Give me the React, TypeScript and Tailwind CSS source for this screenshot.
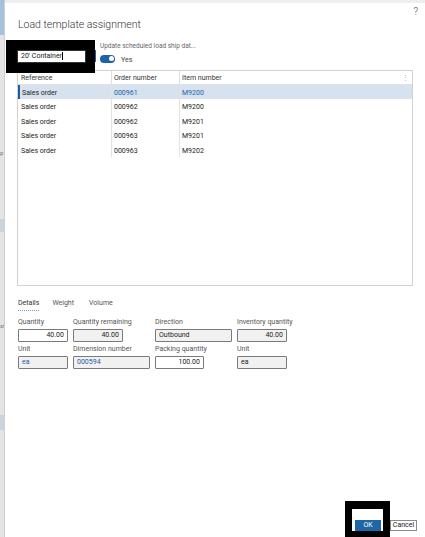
import React from "react";

const rows = [
    { ref: "Sales order", order: "000961", item: "M9200", selected: true },
    { ref: "Sales order", order: "000962", item: "M9200" },
    { ref: "Sales order", order: "000962", item: "M9201" },
    { ref: "Sales order", order: "000963", item: "M9201" },
    { ref: "Sales order", order: "000963", item: "M9202" },
];

function Field({ label, value, width, gray, align = "right", link }: { label: string; value: string; width: string; gray?: boolean; align?: "left" | "right"; link?: boolean }) {
    return (
        <div className="flex flex-col">
            <div className="h-[13px] text-[7px] leading-[13px] text-[#555]">{label}</div>
            <div
                className={`${width} h-[13px] border border-[#7a7a7a] rounded-[1px] px-[3px] text-[7px] leading-[11px] ${gray ? "bg-[#f1f1f1]" : "bg-white"} ${align === "right" ? "text-right" : "text-left"} ${link ? "text-[#1a5fa8]" : "text-[#222]"}`}
            >
                {value}
            </div>
        </div>
    );
}

export default function App(): React.JSX.Element {
    return (
        <div className="relative w-[425px] h-[537px] overflow-hidden bg-white flex font-['Roboto',sans-serif]">
            {/* left background strip */}
            <div className="w-[5px] h-full flex flex-col bg-[#e4e4e4] border-r border-[#cfcfcf]">
                <div className="h-[35px] bg-[#a6c1dc]" />
                <div className="h-[114px]" />
                <div className="h-[8px] text-[6px] leading-[8px] text-[#777] overflow-hidden">p</div>
                <div className="h-[62px]" />
                <div className="h-[13px] bg-[#c9d4dc]" />
                <div className="h-[90px]" />
                <div className="h-[8px] text-[6px] leading-[8px] text-[#777] overflow-hidden">st</div>
                <div className="h-[85px]" />
                <div className="h-[15px] bg-[#c9d4dc]" />
            </div>

            {/* dialog */}
            <div className="flex-1 flex flex-col">
                <div className="h-[3px] bg-[#eeeeee]" />
                <div className="h-[15px] flex justify-end items-end pr-[7px] text-[10px] leading-[12px] font-light text-[#444]">?</div>
                <div className="h-[14px] pl-[13px] text-[10.5px] leading-[14px] font-light text-[#333]">Load template assignment</div>

                <div className="flex h-[38px] pl-[12px]">
                    <div className="w-[83px] pt-[18px] relative">
                        <div className="w-[69px] h-[13px] border border-[#333] bg-white px-[3px] text-[7px] leading-[11px] text-[#222]">
                            20' Container<span className="inline-block w-px h-[8px] bg-black align-middle" />
                        </div>
                        <div className="absolute left-[77px] top-[18px] w-[2px] h-[12px] bg-[#1f5c9c]" />
                    </div>
                    <div className="flex flex-col pt-[10px]">
                        <div className="h-[9px] text-[6.5px] leading-[9px] text-[#666]">Update scheduled load ship dat...</div>
                        <div className="flex items-center gap-[6px] mt-[2px]">
                            <div className="w-[15px] h-[8px] rounded-full bg-[#1d64a6] flex items-center justify-end pr-[1.5px]">
                                <div className="w-[5px] h-[5px] rounded-full bg-white" />
                            </div>
                            <span className="text-[7px] leading-[8px] text-[#444] mt-[3px]">Yes</span>
                        </div>
                    </div>
                </div>

                {/* grid */}
                <div className="ml-[12px] w-[396px] h-[216px] border border-[#d2d2d2] flex flex-col">
                    <div className="flex h-[14px] text-[7px] leading-[15px] text-[#333] border-b border-[#e2e2e2]">
                        <div className="w-[93px] pl-[3px]">Reference</div>
                        <div className="w-[68px] pl-[2px] border-l border-[#dcdcdc]">Order number</div>
                        <div className="flex-1 pl-[2px] border-l border-[#dcdcdc] flex justify-between pr-[3px]">
                            <span>Item number</span>
                            <span className="text-[#aaa]">⋮</span>
                        </div>
                    </div>
                    {rows.map((r, i) => (
                        <div
                            key={i}
                            className={`flex h-[14.4px] text-[7px] leading-[17.5px] ${r.selected ? "bg-[#d6e2ee] border-l-2 border-[#1f5c9c]" : ""}`}
                        >
                            <div className={`${r.selected ? "w-[91px] pl-[2px]" : "w-[93px] pl-[3px]"} text-[#222]`}>{r.ref}</div>
                            <div className={`w-[68px] pl-[2px] border-l border-[#e2e2e2] ${r.selected ? "text-[#1a5fa8]" : "text-[#222]"}`}>{r.order}</div>
                            <div className={`flex-1 pl-[2px] border-l border-[#e2e2e2] ${r.selected ? "text-[#1a5fa8]" : "text-[#222]"}`}>{r.item}</div>
                        </div>
                    ))}
                </div>

                {/* tabs */}
                <div className="flex gap-[13px] pl-[13px] mt-[12px] text-[7px] leading-[10px] text-[#555]">
                    <div className="flex flex-col">
                        <span className="text-[#333]">Details</span>
                        <div className="mt-[2px] h-px border-b border-dotted border-[#7a98c0]" />
                    </div>
                    <span>Weight</span>
                    <span className="ml-[2px]">Volume</span>
                </div>

                {/* details fields */}
                <div className="flex flex-col pl-[13px] mt-[5px] gap-[1px]">
                    <div className="flex">
                        <div className="w-[55px]"><Field label="Quantity" value="40.00" width="w-[50px]" /></div>
                        <div className="w-[82px]"><Field label="Quantity remaining" value="40.00" width="w-[50px]" gray /></div>
                        <div className="w-[82px]"><Field label="Direction" value="Outbound" width="w-[77px]" gray align="left" /></div>
                        <div><Field label="Inventory quantity" value="40.00" width="w-[50px]" gray /></div>
                    </div>
                    <div className="flex">
                        <div className="w-[55px]"><Field label="Unit" value="ea" width="w-[50px]" gray align="left" link /></div>
                        <div className="w-[82px]"><Field label="Dimension number" value="000594" width="w-[77px]" gray align="left" link /></div>
                        <div className="w-[82px]"><Field label="Packing quantity" value="100.00" width="w-[49px]" /></div>
                        <div><Field label="Unit" value="ea" width="w-[50px]" gray align="left" /></div>
                    </div>
                </div>

                <div className="flex-1" />

                {/* buttons */}
                <div className="flex justify-end items-center gap-[9px] pr-[8px] pb-[6px]">
                    <div className="w-[26px] h-[11px] bg-[#1e67a6] text-white text-[7px] leading-[11px] text-center">OK</div>
                    <div className="w-[27px] h-[11px] border border-[#8a8a8a] bg-white text-[#222] text-[7px] leading-[9px] text-center">Cancel</div>
                </div>
            </div>

            {/* redaction overlays */}
            <div className="absolute left-[6px] top-[40px] w-[89px] h-[33px] border-l-[11px] border-r-[9px] border-y-[10px] border-black" />
            <div className="absolute left-[345px] top-[501px] w-[45px] h-[36px] border-x-[7px] border-t-[8px] border-b-[6px] border-black" />
        </div>
    );
}
